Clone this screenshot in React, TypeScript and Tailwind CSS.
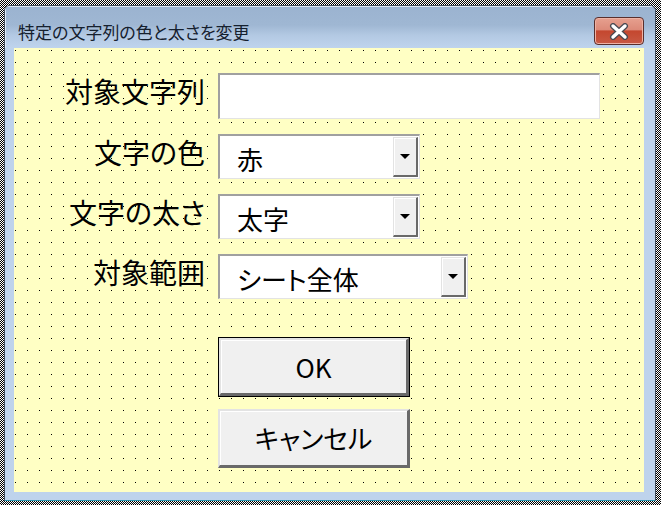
import React from "react";

function Arrow() {
  return (
    <div className="w-0 h-0 border-l-[5px] border-r-[5px] border-t-[5px] border-l-transparent border-r-transparent border-t-black" />
  );
}

function Combo({ value, width }: { value: string; width: string }) {
  return (
    <div
      className={`flex h-[45px] ${width} border-t-2 border-l-2 border-t-[#a0a0a0] border-l-[#a0a0a0] border-b border-r border-b-[#e3e3e3] border-r-[#e3e3e3] bg-white`}
    >
      <div className="flex-1 flex items-center pl-[17px] pt-[4px] text-[26px] leading-none text-black [font-feature-settings:'palt']">{value}</div>
      <div className="mt-[1px] mb-[1px] mr-[1px] w-[25px] flex items-center justify-center bg-[#f0f0f0] border-t border-l border-t-[#e3e3e3] border-l-[#e3e3e3] border-b-2 border-r-2 border-b-[#696969] border-r-[#696969] shadow-[inset_1px_1px_0_#ffffff]">
        <Arrow />
      </div>
    </div>
  );
}

function Row({ label, children, mt }: { label: string; children: React.ReactNode; mt: string }) {
  return (
    <div className={`flex items-center ${mt}`}>
      <div className="w-[204px] pr-[13px] text-right text-[28px] leading-none text-black pb-[10px] whitespace-nowrap [font-feature-settings:'palt']">{label}</div>
      {children}
    </div>
  );
}

export default function App() {
  return (
    <div className="w-[661px] h-[505px] overflow-hidden bg-white bg-[image:conic-gradient(#000_25%,#fff_0_50%,#000_0_75%,#fff_0)] bg-[size:2px_2px] pt-[5px] pl-[4px] font-['Noto_Sans_CJK_JP',sans-serif]">
      <div className="w-[652px] h-[496px] flex flex-col rounded-t-[6px] border border-[#3f4b5a] border-b-[#2f95ad] bg-[#bed3ec] overflow-hidden">
        {/* Title bar */}
        <div className="h-[42px] flex items-start justify-between bg-[linear-gradient(to_bottom,#9bb3d0_0%,#9fb7d3_45%,#b3c9e3_70%,#bfd4ed_100%)] shadow-[inset_1px_1px_0_#dfe8f3]">
          <div className="pl-[13px] pt-[17px] text-[17px] leading-none text-[#15202e] whitespace-nowrap [font-feature-settings:'palt']">特定の文字列の色と太さを変更</div>
          <div className="mt-[11px] mr-[11px] w-[50px] h-[28px] rounded-[4px] border border-[#5a2f2c] bg-[linear-gradient(to_bottom,#e6a08f_0%,#dc8a79_45%,#c4472f_50%,#c85a44_100%)] shadow-[inset_0_0_0_1px_#eeb3a5] flex items-center justify-center">
            <svg width="20" height="17" viewBox="0 0 20 17">
              <path d="M4 3 L16 14 M16 3 L4 14" stroke="#4a4a52" strokeWidth="6" strokeLinecap="round" fill="none" />
              <path d="M4 3 L16 14 M16 3 L4 14" stroke="#ffffff" strokeWidth="3.4" strokeLinecap="round" fill="none" />
            </svg>
          </div>
        </div>
        {/* Client frame */}
        <div className="flex-1 pl-[9px] pr-[11px] pb-[8px] flex">
          <div className="flex-1 bg-black bg-[image:linear-gradient(to_right,transparent_1px,#ffffc4_1px),linear-gradient(to_bottom,transparent_1px,#ffffc4_1px)] bg-[size:12px_12px] bg-[position:1px_2px] flex flex-col pt-[25px]">
            <Row label="対象文字列" mt="mt-0">
              <div className="h-[46px] w-[382px] bg-white border-t-2 border-l-2 border-t-[#a0a0a0] border-l-[#a0a0a0] border-b border-r border-b-[#e3e3e3] border-r-[#e3e3e3]" />
            </Row>
            <Row label="文字の色" mt="mt-[15px]">
              <Combo value="赤" width="w-[202px]" />
            </Row>
            <Row label="文字の太さ" mt="mt-[15px]">
              <Combo value="太字" width="w-[202px]" />
            </Row>
            <Row label="対象範囲" mt="mt-[15px]">
              <Combo value="シート全体" width="w-[250px]" />
            </Row>
            <div className="pl-[204px] mt-[38px]">
              <div className="w-[192px] h-[60px] border border-black">
                <div className="w-full h-full flex items-center justify-center bg-[#f0f0f0] border-t-2 border-l-2 border-t-[#e3e3e3] border-l-[#e3e3e3] border-b-[3px] border-r-[3px] border-b-[#696969] border-r-[#696969] shadow-[inset_1px_1px_0_#ffffff] text-[26px] leading-none text-black">
                  OK
                </div>
              </div>
            </div>
            <div className="pl-[204px] mt-[12px]">
              <div className="w-[192px] h-[59px] flex items-center justify-center bg-[#f0f0f0] border-t-2 border-l-2 border-t-[#e3e3e3] border-l-[#e3e3e3] border-b-[3px] border-r-[3px] border-b-[#696969] border-r-[#696969] shadow-[inset_1px_1px_0_#ffffff] text-[26px] leading-none text-black [font-feature-settings:'palt']">
                キャンセル
              </div>
            </div>
          </div>
        </div>
      </div>
    </div>
  );
}
